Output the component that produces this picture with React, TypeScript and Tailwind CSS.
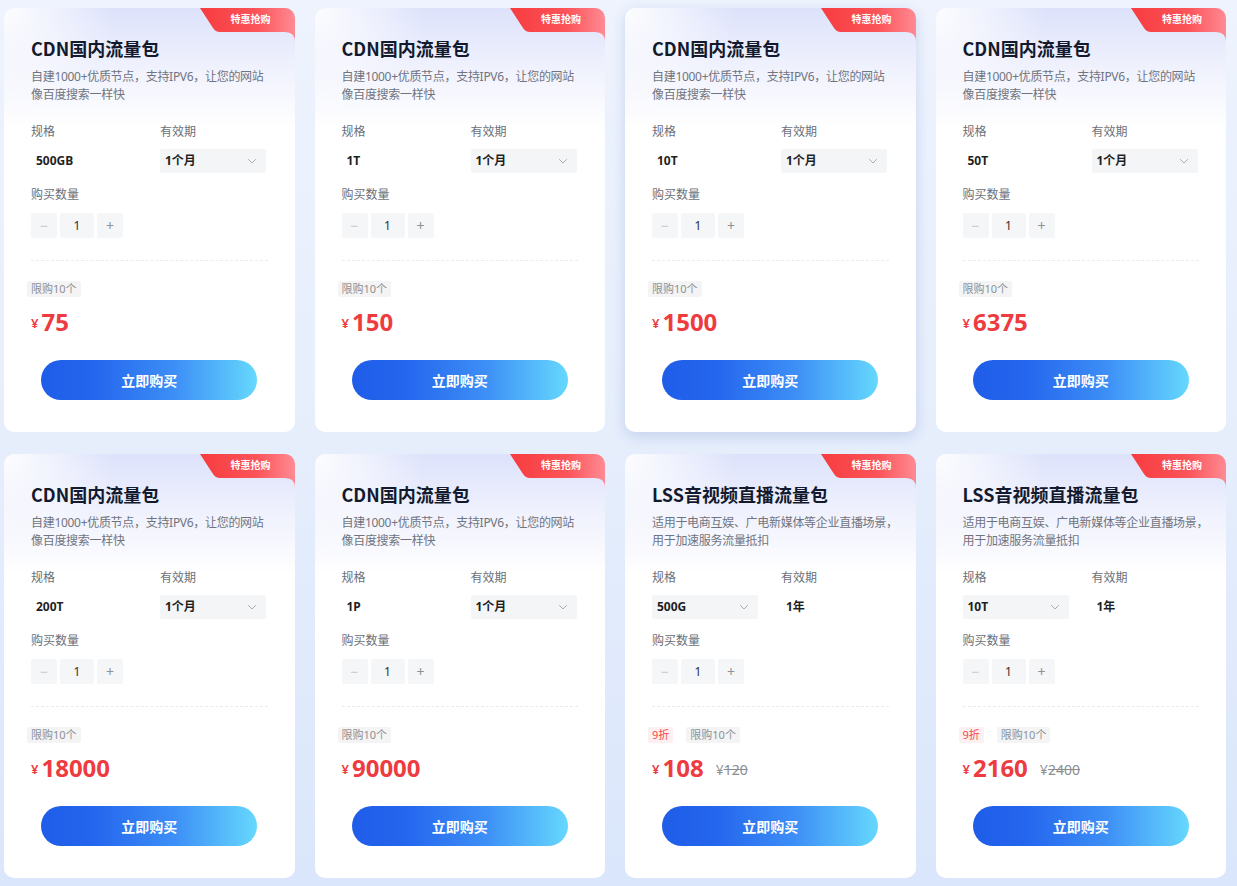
import React from "react";

type Card = {
  title: string;
  desc: [string, string];
  spec: string;
  specSelect?: boolean;
  period: string;
  periodSelect?: boolean;
  price: string;
  original?: string;
  discount?: string;
  hover?: boolean;
};

const cdnDesc: [string, string] = ["自建1000+优质节点，支持IPV6，让您的网站", "像百度搜索一样快"];
const lssDesc: [string, string] = ["适用于电商互娱、广电新媒体等企业直播场景，", "用于加速服务流量抵扣"];

const cards: Card[] = [
  { title: "CDN国内流量包", desc: cdnDesc, spec: "500GB", period: "1个月", periodSelect: true, price: "75" },
  { title: "CDN国内流量包", desc: cdnDesc, spec: "1T", period: "1个月", periodSelect: true, price: "150" },
  { title: "CDN国内流量包", desc: cdnDesc, spec: "10T", period: "1个月", periodSelect: true, price: "1500", hover: true },
  { title: "CDN国内流量包", desc: cdnDesc, spec: "50T", period: "1个月", periodSelect: true, price: "6375" },
  { title: "CDN国内流量包", desc: cdnDesc, spec: "200T", period: "1个月", periodSelect: true, price: "18000" },
  { title: "CDN国内流量包", desc: cdnDesc, spec: "1P", period: "1个月", periodSelect: true, price: "90000" },
  { title: "LSS音视频直播流量包", desc: lssDesc, spec: "500G", specSelect: true, period: "1年", price: "108", original: "120", discount: "9折" },
  { title: "LSS音视频直播流量包", desc: lssDesc, spec: "10T", specSelect: true, period: "1年", price: "2160", original: "2400", discount: "9折" },
];

function Chevron() {
  return (
    <svg width="10" height="10" viewBox="0 0 10 10" fill="none">
      <path d="M1.5 3.5 L5 7 L8.5 3.5" stroke="#a8abb2" strokeWidth="1" strokeLinecap="round" strokeLinejoin="round" />
    </svg>
  );
}

function Value({ text, select }: { text: string; select?: boolean }) {
  if (select) {
    return (
      <div className="flex h-[24px] w-[106px] items-center justify-between rounded-[2px] bg-[#f3f5f7] pl-[5px] pr-[9px]">
        <span className="text-[12px] font-bold text-[#1f1f1f]">{text}</span>
        <Chevron />
      </div>
    );
  }
  return (
    <div className="flex h-[24px] items-center pl-[5px]">
      <span className="text-[12px] font-bold text-[#1f1f1f]">{text}</span>
    </div>
  );
}

function Badge() {
  return (
    <div className="absolute right-0 top-0 h-[34px] w-[95px]">
      <svg width="95" height="34" viewBox="0 0 95 34" className="absolute inset-0">
        <defs>
          <linearGradient id="bdg" x1="0" y1="0" x2="1" y2="0">
            <stop offset="0" stopColor="#f73c3f" />
            <stop offset="0.6" stopColor="#fb5459" />
            <stop offset="1" stopColor="#ff8a93" />
          </linearGradient>
        </defs>
        <path d="M0 0 H95 V34 Q95 24 85 24 H20 Q15.5 24 13 20 L0 0 Z" fill="url(#bdg)" />
      </svg>
      <span className="absolute left-[31px] top-[3px] text-[10px] font-bold leading-[16px] text-white">特惠抢购</span>
    </div>
  );
}

function ProductCard({ c }: { c: Card }) {
  return (
    <div
      className={
        "relative overflow-hidden rounded-[10px] bg-white px-[27px] pb-[32px] pt-[27px] " +
        (c.hover ? "shadow-[0_4px_14px_rgba(40,80,170,0.18)]" : "")
      }
    >
      <div className="pointer-events-none absolute inset-x-0 top-0 h-[120px] bg-[radial-gradient(circle_at_0_0,rgba(255,255,255,0.95),rgba(255,255,255,0)_110px),linear-gradient(180deg,#dde2fb_0%,#eef0fd_45%,#ffffff_100%)]" />
      <Badge />
      <div className="relative">
        <div className="font-['Noto_Sans_CJK_SC',sans-serif] text-[18px] font-bold leading-[26px] text-[#131a2e]">{c.title}</div>
        <div className="mt-[7px] whitespace-nowrap text-[12px] leading-[18px] tracking-[-0.3px] text-[#707480]">
          <div>{c.desc[0]}</div>
          <div>{c.desc[1]}</div>
        </div>
        <div className="mt-[19px] grid grid-cols-[129px_1fr]">
          <div className="text-[12px] leading-[18px] text-[#6b6f78]">规格</div>
          <div className="text-[12px] leading-[18px] text-[#6b6f78]">有效期</div>
          <div className="mt-[8px]">
            <Value text={c.spec} select={c.specSelect} />
          </div>
          <div className="mt-[8px]">
            <Value text={c.period} select={c.periodSelect} />
          </div>
        </div>
        <div className="mt-[13px] text-[12px] leading-[18px] text-[#6b6f78]">购买数量</div>
        <div className="mt-[9px] flex gap-[3px]">
          <div className="flex h-[25px] w-[26px] items-center justify-center rounded-[2px] bg-[#f5f6f7] text-[14px] text-[#c8cbd1]">−</div>
          <div className="flex h-[25px] w-[34px] items-center justify-center rounded-[2px] bg-[#f5f6f7] text-[12px] text-[#303133]">1</div>
          <div className="flex h-[25px] w-[26px] items-center justify-center rounded-[2px] bg-[#f5f6f7] text-[14px] text-[#8e9196]">+</div>
        </div>
        <div className="mt-[22px] border-t border-dashed border-[#e9ebef]" />
        <div className="ml-[-4px] mt-[20px] flex items-center gap-[13px]">
          {c.discount && (
            <span className="rounded-[2px] bg-[#fef0f0] px-[4px] text-[11px] leading-[16px] text-[#f5484b]">{c.discount}</span>
          )}
          <span className="rounded-[2px] bg-[#f4f4f5] px-[4px] text-[11px] leading-[16px] text-[#8e9196]">限购10个</span>
        </div>
        <div className="mt-[9px] flex h-[32px] items-center">
          <span className="mr-[3px] mt-[4px] text-[13px] font-semibold text-[#ee3b3f]">¥</span>
          <span className="text-[24px] font-bold leading-[32px] text-[#ee3b3f]">{c.price}</span>
          {c.original && (
            <span className="ml-[12px] mt-[3px] text-[14px] text-[#8b8d92]">
              ¥<span className="line-through">{c.original}</span>
            </span>
          )}
        </div>
        <div className="mt-[22px] flex justify-center">
          <button className="flex h-[40px] w-[216px] items-center justify-center rounded-full bg-[linear-gradient(90deg,#1f5de8_0%,#2566ee_25%,#3d8ff6_62%,#66d8fd_100%)] text-[14px] font-bold text-white">
            立即购买
          </button>
        </div>
      </div>
    </div>
  );
}

export default function App() {
  return (
    <div className="min-h-[886px] w-full bg-[linear-gradient(180deg,#eef3fd_0%,#e6eefc_50%,#dae6fb_100%)] pt-[8px] font-['Noto_Sans','Noto_Sans_CJK_SC',sans-serif]">
      <div className="ml-[4px] grid w-[1222px] grid-cols-4 gap-x-[20px] gap-y-[22px]">
        {cards.map((c, i) => (
          <ProductCard key={i} c={c} />
        ))}
      </div>
    </div>
  );
}
